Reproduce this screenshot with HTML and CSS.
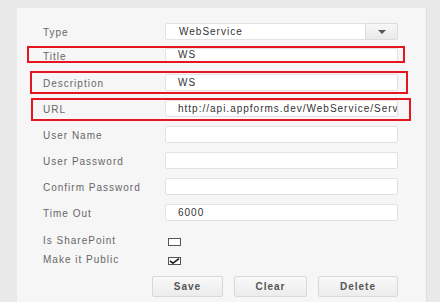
FILE: index.html
```html
<!DOCTYPE html>
<html>
<head>
<meta charset="utf-8">
<link rel="stylesheet" href="styles.css">
</head>
<body>
<div class="panel">
  <form class="form">
    <div class="row">
      <label class="label">Type</label>
      <div class="select">
        <span class="select-value">WebService</span>
        <span class="select-btn"><span class="caret"></span></span>
      </div>
    </div>
    <div class="row row-title">
      <label class="label">Title</label>
      <div class="input">WS</div>
    </div>
    <div class="row">
      <label class="label">Description</label>
      <div class="input">WS</div>
    </div>
    <div class="row">
      <label class="label">URL</label>
      <div class="input">http://api.appforms.dev/WebService/Serv</div>
    </div>
    <div class="row">
      <label class="label">User Name</label>
      <div class="input"></div>
    </div>
    <div class="row">
      <label class="label">User Password</label>
      <div class="input"></div>
    </div>
    <div class="row">
      <label class="label">Confirm Password</label>
      <div class="input"></div>
    </div>
    <div class="row">
      <label class="label">Time Out</label>
      <div class="input">6000</div>
    </div>
    <div class="row check-row first-check">
      <label class="label">Is SharePoint</label>
      <span class="checkbox"></span>
    </div>
    <div class="row check-row">
      <label class="label">Make it Public</label>
      <span class="checkbox checked">
        <svg width="11" height="6" viewBox="0 0 11 6"><path d="M1 3 L4 5.2 L10 0.6" fill="none" stroke="#222" stroke-width="1.6"/></svg>
      </span>
    </div>
    <div class="actions">
      <button type="button" class="btn btn-save">Save</button>
      <button type="button" class="btn btn-clear">Clear</button>
      <button type="button" class="btn btn-delete">Delete</button>
    </div>
  </form>
  <div class="mark mark-title"></div>
  <div class="mark mark-desc"></div>
  <div class="mark mark-url"></div>
</div>
</body>
</html>
```
FILE: styles.css
```css
html, body {
  margin: 0;
  padding: 0;
}
body {
  background: #e9e9e9;
  font-family: "Liberation Sans", Arial, sans-serif;
  font-size: 10px;
  letter-spacing: 1px;
  overflow: hidden;
  height: 302px;
}
.panel {
  position: relative;
  margin: 8px 0 0 17px;
  width: 410px;
  height: 300px;
  box-sizing: border-box;
  background: #f6f6f6;
  border-right: 1px solid #dedede;
  padding: 15px 0 0 26px;
}
.form {
  margin: 0;
  display: flex;
  flex-direction: column;
}
.row {
  display: grid;
  grid-template-columns: 122px 233px;
  align-items: center;
  height: 17px;
  margin-bottom: 9px;
}
.row-title {
  height: 14px;
  margin-top: -1px;
  margin-bottom: 12px;
}
.row-title .input {
  height: 14px;
  line-height: 12px;
}
.label {
  color: #666;
  white-space: nowrap;
  padding-top: 2px;
}
.input, .select {
  box-sizing: border-box;
  height: 17px;
  background: #fff;
  border: 1px solid #e2e2e2;
  border-radius: 2px;
  color: #333;
  padding-left: 12px;
  line-height: 15px;
  white-space: nowrap;
  overflow: hidden;
}
.select {
  display: flex;
  padding-left: 0;
  overflow: visible;
}
.select-value {
  flex: 1;
  padding-left: 13px;
}
.select-btn {
  width: 31px;
  margin: -1px -1px -1px 0;
  border: 1px solid #dcdcdc;
  border-radius: 0 2px 2px 0;
  background: linear-gradient(#f7f7f7, #e9e9e9);
  display: flex;
  align-items: center;
  justify-content: center;
}
.caret {
  width: 0;
  height: 0;
  border-left: 4px solid transparent;
  border-right: 4px solid transparent;
  border-top: 4px solid #555;
  margin-top: 1px;
}
.check-row {
  height: 12px;
  margin-bottom: 7px;
}
.check-row .label {
  padding-top: 0;
}
.first-check {
  margin-top: 4px;
}
.checkbox {
  box-sizing: border-box;
  width: 13px;
  height: 8px;
  margin: 3px 0 0 3px;
  border: 1px solid #555;
  background: #fff;
  display: flex;
  align-items: center;
  justify-content: center;
}
.checkbox svg {
  display: block;
}
.actions {
  display: flex;
  justify-content: flex-end;
  gap: 11px;
  width: 355px;
  margin-top: 4px;
}
.btn {
  box-sizing: border-box;
  height: 21px;
  border: 1px solid #d9d9d9;
  border-radius: 2px;
  background: linear-gradient(#f9f9f9, #ececec);
  color: #555;
  font-family: "Liberation Sans", Arial, sans-serif;
  font-size: 10px;
  font-weight: bold;
  letter-spacing: 1px;
  padding: 0;
}
.btn-save { width: 71px; }
.btn-clear { width: 73px; }
.btn-delete { width: 80px; }
.mark {
  position: absolute;
  box-sizing: border-box;
  border: 2px solid #e5161f;
}
.mark-title {
  left: 10px;
  top: 38px;
  width: 378px;
  height: 17px;
}
.mark-desc {
  left: 13px;
  top: 63px;
  width: 378px;
  height: 23px;
}
.mark-url {
  left: 14px;
  top: 90px;
  width: 380px;
  height: 23px;
}
```
